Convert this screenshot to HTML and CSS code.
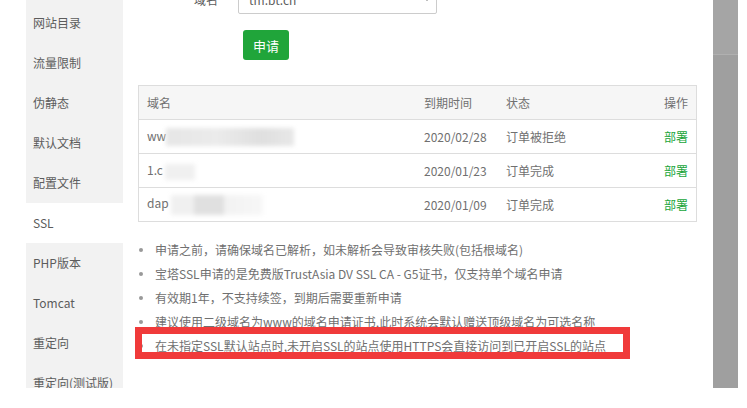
FILE: index.html
```html
<!DOCTYPE html>
<html lang="zh-CN">
<head>
    <meta charset="UTF-8">
    <meta name="viewport" content="width=device-width, initial-scale=1.0">
    <title>网站设置 - SSL</title>
    <link rel="stylesheet" href="styles.css">
</head>
<body>
    <div class="frame">
        <div class="gutter"></div>

        <ul class="side">
            <li>网站目录</li>
            <li>流量限制</li>
            <li>伪静态</li>
            <li>默认文档</li>
            <li>配置文件</li>
            <li class="active">SSL</li>
            <li>PHP版本</li>
            <li>Tomcat</li>
            <li>重定向</li>
            <li>重定向(测试版)</li>
        </ul>

        <div class="content">
            <div class="form-row">
                <span class="label">域名</span>
                <div class="select">
                    <span>tm.bt.cn</span>
                    <span class="caret"></span>
                </div>
            </div>
            <button class="btn-green">申请</button>

            <table class="cert-table">
                <thead>
                    <tr>
                        <th class="col-domain">域名</th>
                        <th class="col-date">到期时间</th>
                        <th>状态</th>
                        <th class="col-op">操作</th>
                    </tr>
                </thead>
                <tbody>
                    <tr>
                        <td>ww<span class="blur blur-a"></span></td>
                        <td>2020/02/28</td>
                        <td>订单被拒绝</td>
                        <td class="col-op"><a class="link">部署</a></td>
                    </tr>
                    <tr>
                        <td>1.c<span class="blur blur-b"></span></td>
                        <td>2020/01/23</td>
                        <td>订单完成</td>
                        <td class="col-op"><a class="link">部署</a></td>
                    </tr>
                    <tr>
                        <td>dap<span class="blur blur-c"></span></td>
                        <td>2020/01/09</td>
                        <td>订单完成</td>
                        <td class="col-op"><a class="link">部署</a></td>
                    </tr>
                </tbody>
            </table>

            <ul class="tips">
                <li>申请之前，请确保域名已解析，如未解析会导致审核失败(包括根域名)</li>
                <li>宝塔SSL申请的是免费版TrustAsia DV SSL CA - G5证书，仅支持单个域名申请</li>
                <li>有效期1年，不支持续签，到期后需要重新申请</li>
                <li>建议使用二级域名为www的域名申请证书,此时系统会默认赠送顶级域名为可选名称</li>
                <li>在未指定SSL默认站点时,未开启SSL的站点使用HTTPS会直接访问到已开启SSL的站点</li>
            </ul>
            <div class="mark"></div>
        </div>

        <div class="shade">
            <div class="shade-top"></div>
        </div>
    </div>
</body>
</html>
```

FILE: styles.css
```css
body {
    margin: 0;
    background-color: #fff;
    font-family: "Noto Sans CJK SC", "Noto Sans", sans-serif;
    font-size: 12px;
    color: #707070;
}
.frame {
    display: flex;
    width: 738px;
    height: 388px;
    overflow: hidden;
}
.gutter {
    width: 26px;
    flex-shrink: 0;
}
.side {
    width: 97px;
    flex-shrink: 0;
    margin: 0;
    padding: 3px 0 0;
    list-style: none;
    background-color: #f2f2f2;
}
.side li {
    height: 40px;
    line-height: 40px;
    padding-left: 7px;
    color: #5c5c5c;
    white-space: nowrap;
}
.side .active {
    background-color: #fff;
}
.content {
    position: relative;
    flex: 1;
    padding: 0 16px 0 15px;
}
.form-row {
    display: flex;
    align-items: center;
    margin-top: -16px;
}
.label {
    width: 80px;
    margin-right: 20px;
    text-align: right;
    color: #5c5c5c;
}
.select {
    display: flex;
    justify-content: space-between;
    align-items: center;
    box-sizing: border-box;
    width: 199px;
    height: 30px;
    padding: 0 6px 0 10px;
    border: 1px solid #ccc;
    border-radius: 2px;
    color: #5c5c5c;
}
.caret {
    width: 0;
    height: 0;
    border-left: 3px solid transparent;
    border-right: 3px solid transparent;
    border-top: 4px solid #555;
}
.btn-green {
    display: block;
    width: 46px;
    height: 30px;
    margin: 16px 0 0 105px;
    padding: 0;
    border: none;
    border-radius: 3px;
    background-color: #20a53a;
    color: #fff;
    font-family: inherit;
    font-size: 13px;
}
.cert-table {
    width: 100%;
    margin-top: 25px;
    border-collapse: collapse;
    border: 1px solid #ddd;
}
.cert-table th,
.cert-table td {
    height: 33px;
    padding: 0 8px;
    border-top: 1px solid #ddd;
    text-align: left;
    font-weight: normal;
    color: #707070;
    white-space: nowrap;
}
.cert-table th {
    background-color: #f6f6f6;
}
.col-domain {
    width: 261px;
}
.col-date {
    width: 66px;
}
.cert-table .col-op {
    text-align: right;
}
.link {
    color: #20a53a;
}
.blur {
    display: inline-block;
    vertical-align: middle;
    filter: blur(2px);
}
.blur-a {
    width: 128px;
    height: 18px;
    background: linear-gradient(90deg, #e6e6e6 0, #ebebeb 40%, #dfdfdf 75%, #e8e8e8 100%);
}
.blur-b {
    width: 30px;
    height: 16px;
    margin-left: 2px;
    background-color: #f0f0f0;
}
.blur-c {
    width: 92px;
    height: 20px;
    margin-left: 2px;
    background: linear-gradient(90deg, #f0f0f0 0, #f0f0f0 25%, #e0e0e0 25%, #e0e0e0 58%, #f2f2f2 58%, #f7f7f7 100%);
}
.tips {
    margin: 16px 0 0;
    padding: 0;
    list-style: none;
}
.tips li {
    position: relative;
    height: 24px;
    line-height: 24px;
    padding-left: 17px;
    white-space: nowrap;
}
.tips li::before {
    content: "";
    position: absolute;
    left: 1px;
    top: 10px;
    width: 4px;
    height: 4px;
    border-radius: 50%;
    background-color: #999;
}
.mark {
    position: absolute;
    left: 12px;
    top: 327px;
    width: 481px;
    height: 18px;
    border: 7px solid #f03a3a;
}
.shade {
    width: 25px;
    flex-shrink: 0;
    margin-left: auto;
    background-color: #9f9f9f;
}
.shade-top {
    height: 54px;
    background-color: #a5a5a5;
    border-bottom: 1px solid #b0b0b0;
}
```
